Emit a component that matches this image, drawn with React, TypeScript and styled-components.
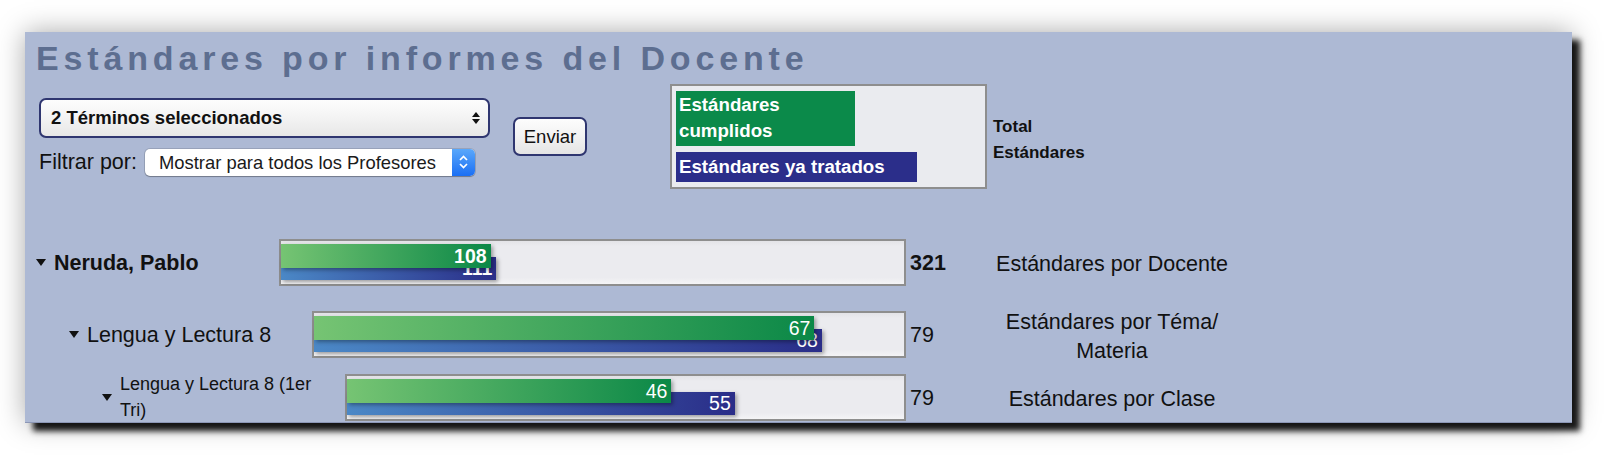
import * as React from "react";
import styled, { createGlobalStyle } from "styled-components";

const GlobalStyle = createGlobalStyle`
  html, body {
    margin: 0;
    padding: 0;
    background: #ffffff;
  }
  body {
    font-family: "Liberation Sans", Arial, Helvetica, sans-serif;
    color: #111;
  }
`;

const Page = styled.div`
  padding: 32px 0 40px 25px;
`;

const Panel = styled.div`
  width: 1547px;
  height: 391px;
  box-sizing: border-box;
  background: #adb9d4;
  border-bottom: 1px solid #8c97b6;
  box-shadow: 8px 8px 6px rgba(0, 0, 0, 0.9), 0 0 26px rgba(0, 0, 0, 0.34);
  padding: 6px 11px 0;
  overflow: hidden;
`;

const Title = styled.h1`
  margin: 0;
  font-size: 34px;
  line-height: 40px;
  font-weight: bold;
  letter-spacing: 4.85px;
  color: #5d6e90;
  white-space: nowrap;
`;

const Header = styled.div`
  display: flex;
  align-items: center;
  margin-top: 6px;
  padding-left: 3px;
`;

const Controls = styled.div`
  display: flex;
  flex-direction: column;
  gap: 11px;
`;

const TermSelect = styled.div`
  width: 451px;
  height: 40px;
  box-sizing: border-box;
  border: 2px solid #2f3670;
  border-radius: 7px;
  background: linear-gradient(#fdfdfd, #f3f3f3 50%, #e7e7e7);
  display: flex;
  align-items: center;
  justify-content: space-between;
  padding: 0 8px 0 10px;
  font-weight: bold;
  font-size: 18.5px;
  color: #111;
`;

const FilterRow = styled.div`
  display: flex;
  align-items: center;
  gap: 8px;
`;

const FilterLabel = styled.span`
  font-size: 21.5px;
  color: #111;
`;

const TeacherSelect = styled.div`
  width: 330px;
  height: 27px;
  box-sizing: border-box;
  display: flex;
  background: #fff;
  border-radius: 5px;
  box-shadow: 0 0 0 1px rgba(0, 0, 0, 0.12), 0 1px 1px rgba(0, 0, 0, 0.25);
  overflow: hidden;
`;

const TeacherText = styled.span`
  flex: 1;
  padding-left: 14px;
  font-size: 18.4px;
  line-height: 27px;
  color: #1a1a1a;
  white-space: nowrap;
`;

const Stepper = styled.span`
  width: 23px;
  display: flex;
  align-items: center;
  justify-content: center;
  background: linear-gradient(#5aa8fb, #1b6ff4);
`;

const SendButton = styled.button`
  width: 74px;
  height: 39px;
  margin-left: 23px;
  padding: 0;
  box-sizing: border-box;
  border: 2px solid #2f3670;
  border-radius: 7px;
  background: linear-gradient(#fdfdfd, #f2f2f2 50%, #e4e4e4);
  font-family: inherit;
  font-size: 18.5px;
  color: #111;
`;

const Legend = styled.div`
  width: 317px;
  height: 105px;
  box-sizing: border-box;
  margin-left: 83px;
  border: 2px solid #8e8e8e;
  background: #eaebef;
  padding: 5px 4px;
  display: flex;
  flex-direction: column;
  gap: 6px;
`;

const Swatch = styled.div<{ $color: string; $width: number; $height: number }>`
  width: ${(p) => p.$width}px;
  height: ${(p) => p.$height}px;
  box-sizing: border-box;
  background: ${(p) => p.$color};
  color: #fff;
  font-weight: bold;
  font-size: 18.7px;
  line-height: ${(p) => (p.$height > 40 ? "26px" : `${p.$height}px`)};
  padding: ${(p) => (p.$height > 40 ? "1px 3px" : "0 3px")};
`;

const TotalNote = styled.div`
  margin-left: 6px;
  margin-top: 6px;
  font-size: 17px;
  font-weight: bold;
  line-height: 26px;
  color: #111;
`;

const Rows = styled.div`
  width: 1201px;
  margin-top: 50px;
`;

const Row = styled.div<{ $level: number; $space: number }>`
  display: grid;
  grid-template-columns: ${(p) => 243 + p.$level * 33}px 1fr 81px 250px;
  align-items: center;
  margin-top: ${(p) => p.$space}px;
`;

const Label = styled.div<{ $level: number }>`
  display: flex;
  align-items: center;
  gap: 8px;
  padding-left: ${(p) => p.$level * 33}px;
  padding-right: 20px;
`;

const Caret = styled.span`
  flex: none;
  width: 0;
  height: 0;
  border-left: 5.5px solid transparent;
  border-right: 5.5px solid transparent;
  border-top: 7px solid #111;
`;

const LabelText = styled.span<{ $size: number; $bold?: boolean }>`
  font-size: ${(p) => p.$size}px;
  font-weight: ${(p) => (p.$bold ? "bold" : "normal")};
  line-height: 26px;
  color: #111;
`;

const Track = styled.div`
  height: 47px;
  box-sizing: border-box;
  border: 2px solid #8e8e8e;
  background: linear-gradient(#e3e3e7, #ebebef 12%, #ebebef 85%, #f4f4f6);
  padding-top: 3px;
`;

const Bar = styled.div<{ $kind: "met" | "treated"; $bold?: boolean }>`
  position: relative;
  z-index: ${(p) => (p.$kind === "met" ? 2 : 1)};
  height: ${(p) => (p.$kind === "met" ? 24 : 23)}px;
  margin-top: ${(p) => (p.$kind === "met" ? 0 : -11)}px;
  box-sizing: border-box;
  background: ${(p) =>
    p.$kind === "met"
      ? "linear-gradient(90deg, #76c473, #0b8847)"
      : "linear-gradient(90deg, #4b88c6, #2a2d88)"};
  box-shadow: 2px 2px 4px rgba(0, 0, 0, 0.35);
  color: #fff;
  text-align: right;
  padding-right: 4px;
  font-size: 19.5px;
  font-weight: ${(p) => (p.$bold ? "bold" : "normal")};
  line-height: ${(p) => (p.$kind === "met" ? 24 : 23)}px;
  white-space: nowrap;
`;

const Total = styled.div<{ $bold?: boolean }>`
  padding-left: 4px;
  padding-top: 2px;
  font-size: 21.5px;
  font-weight: ${(p) => (p.$bold ? "bold" : "normal")};
  color: #111;
`;

const Desc = styled.div`
  padding-top: 4px;
  text-align: center;
  font-size: 21.5px;
  line-height: 28.5px;
  color: #111;
`;

type Entry = {
  level: number;
  label: string;
  size: number;
  bold?: boolean;
  met: number;
  treated: number;
  total: number;
  desc: string;
  space: number;
};

const entries: Entry[] = [
  {
    level: 0,
    label: "Neruda, Pablo",
    size: 21.5,
    bold: true,
    met: 108,
    treated: 111,
    total: 321,
    desc: "Estándares por Docente",
    space: 0,
  },
  {
    level: 1,
    label: "Lengua y Lectura 8",
    size: 21.5,
    met: 67,
    treated: 68,
    total: 79,
    desc: "Estándares por Téma/ Materia",
    space: 18,
  },
  {
    level: 2,
    label: "Lengua y Lectura 8 (1er Tri)",
    size: 18,
    met: 46,
    treated: 55,
    total: 79,
    desc: "Estándares por Clase",
    space: 6,
  },
];

const UpDown = () => (
  <svg width="8" height="12" viewBox="0 0 8 12">
    <polygon points="0,5 4,0 8,5" fill="#111" />
    <polygon points="0,7 4,12 8,7" fill="#111" />
  </svg>
);

const Chevrons = () => (
  <svg width="13" height="16" viewBox="0 0 13 16">
    <polyline points="3,6 6.5,2.5 10,6" fill="none" stroke="#fff" strokeWidth="1.7" />
    <polyline points="3,10 6.5,13.5 10,10" fill="none" stroke="#fff" strokeWidth="1.7" />
  </svg>
);

const App = () => {
  return (
    <Page>
      <GlobalStyle />
      <Panel>
        <Title>Estándares por informes del Docente</Title>
        <Header>
          <Controls>
            <TermSelect>
              <span>2 Términos seleccionados</span>
              <UpDown />
            </TermSelect>
            <FilterRow>
              <FilterLabel>Filtrar por:</FilterLabel>
              <TeacherSelect>
                <TeacherText>Mostrar para todos los Profesores</TeacherText>
                <Stepper>
                  <Chevrons />
                </Stepper>
              </TeacherSelect>
            </FilterRow>
          </Controls>
          <SendButton>Enviar</SendButton>
          <Legend>
            <Swatch $color="#0b8a4a" $width={179} $height={55}>
              Estándares cumplidos
            </Swatch>
            <Swatch $color="#2b2e8a" $width={241} $height={30}>
              Estándares ya tratados
            </Swatch>
          </Legend>
          <TotalNote>
            Total
            <br />
            Estándares
          </TotalNote>
        </Header>
        <Rows>
          {entries.map((e) => (
            <Row key={e.label} $level={e.level} $space={e.space}>
              <Label $level={e.level}>
                <Caret />
                <LabelText $size={e.size} $bold={e.bold}>
                  {e.label}
                </LabelText>
              </Label>
              <Track>
                <Bar
                  $kind="met"
                  $bold={e.bold}
                  style={{ width: `${(e.met / e.total) * 100}%` }}
                >
                  {e.met}
                </Bar>
                <Bar
                  $kind="treated"
                  $bold={e.bold}
                  style={{ width: `${(e.treated / e.total) * 100}%` }}
                >
                  {e.treated}
                </Bar>
              </Track>
              <Total $bold={e.bold}>{e.total}</Total>
              <Desc>{e.desc}</Desc>
            </Row>
          ))}
        </Rows>
      </Panel>
    </Page>
  );
};

export default App;
